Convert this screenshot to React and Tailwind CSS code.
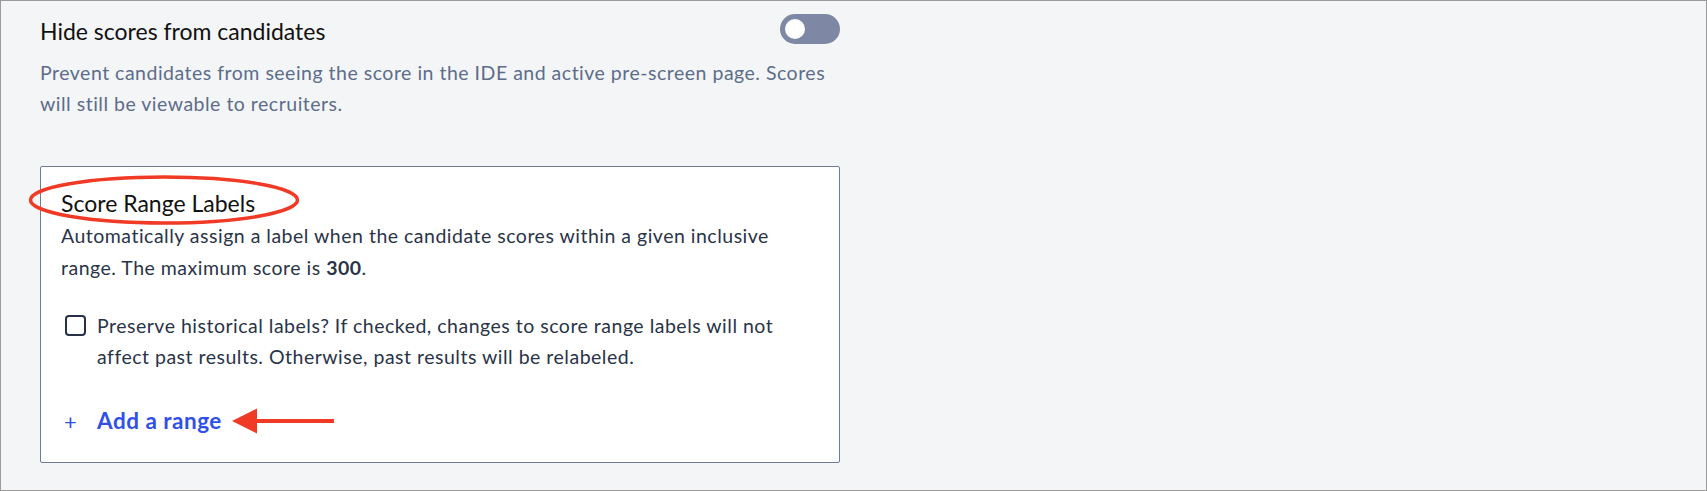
import { useState } from "react";

function Toggle({ on, onChange }) {
  return (
    <button
      onClick={() => onChange(!on)}
      className="w-[60px] h-[30px] rounded-full bg-[#7e88a5] flex items-center px-[5px]"
    >
      <span
        className={`w-[20px] h-[20px] rounded-full bg-white block transition ${
          on ? "translate-x-[30px]" : ""
        }`}
      />
    </button>
  );
}

function App() {
  const [hidden, setHidden] = useState(false);
  const [preserve, setPreserve] = useState(false);

  return (
    <div
      className="w-[1707px] h-[491px] bg-[#f4f5f7] border border-[#9b9b9b] pl-[39px]"
      style={{ fontFamily: "Lato, 'Noto Sans', sans-serif" }}
    >
      <div className="w-[800px]">
        {/* Toggle setting */}
        <div className="flex items-center justify-between pt-[11px]">
          <h3 className="text-[23px] leading-[30px] text-[#111] mt-[4px]">
            Hide scores from candidates
          </h3>
          <Toggle on={hidden} onChange={setHidden} />
        </div>
        <p className="mt-[11px] text-[19.5px] tracking-[0.5px] leading-[31px] text-[#5c6d8a] pr-[10px]">
          Prevent candidates from seeing the score in the IDE and active pre-screen page. Scores
          will still be viewable to recruiters.
        </p>

        {/* Score range card */}
        <div className="mt-[47px] bg-white border border-[#6f7b93] rounded-[2px] pl-[20px] pt-[24px] pb-[29px] pr-[47px]">
          <div className="relative">
            <h3 className="text-[23px] leading-[24px] text-[#111]">Score Range Labels</h3>
            <svg
              className="absolute left-[-33px] top-[-16px]"
              width="272"
              height="50"
              viewBox="0 0 272 50"
            >
              <ellipse cx="136" cy="25" rx="133.5" ry="23" fill="none" stroke="#f03a25" strokeWidth="3.5" />
            </svg>
          </div>
          <p className="mt-[5px] text-[19.5px] tracking-[0.5px] leading-[32px] text-[#2a3448]">
            Automatically assign a label when the candidate scores within a given inclusive
            range. The maximum score is <b>300</b>.
          </p>

          <label className="mt-[26px] flex items-start gap-[11px] pl-[4px] cursor-pointer">
            <span
              onClick={() => setPreserve(!preserve)}
              className={`mt-[5px] w-[21px] h-[21px] shrink-0 rounded-[4px] border-[2.5px] border-[#27324a] ${
                preserve ? "bg-[#27324a]" : ""
              }`}
            />
            <span className="text-[19.5px] tracking-[0.5px] leading-[31px] text-[#2a3448]">
              Preserve historical labels? If checked, changes to score range labels will not
              affect past results. Otherwise, past results will be relabeled.
            </span>
          </label>

          <div className="mt-[37px] flex items-center h-[24px]">
            <button className="flex items-center text-[#3050e8] font-bold text-[22.5px] tracking-[0.5px]">
              <span className="font-normal text-[22px] w-[36px] pl-[3px] text-left">+</span>
              Add a range
            </button>
            <svg className="ml-[10px]" width="102" height="28" viewBox="0 0 102 28">
              <polygon points="0,14 25,1.5 25,26.5" fill="#f03a25" />
              <rect x="23" y="12" width="79" height="4" fill="#f03a25" />
            </svg>
          </div>
        </div>
      </div>
    </div>
  );
}

export default App;
